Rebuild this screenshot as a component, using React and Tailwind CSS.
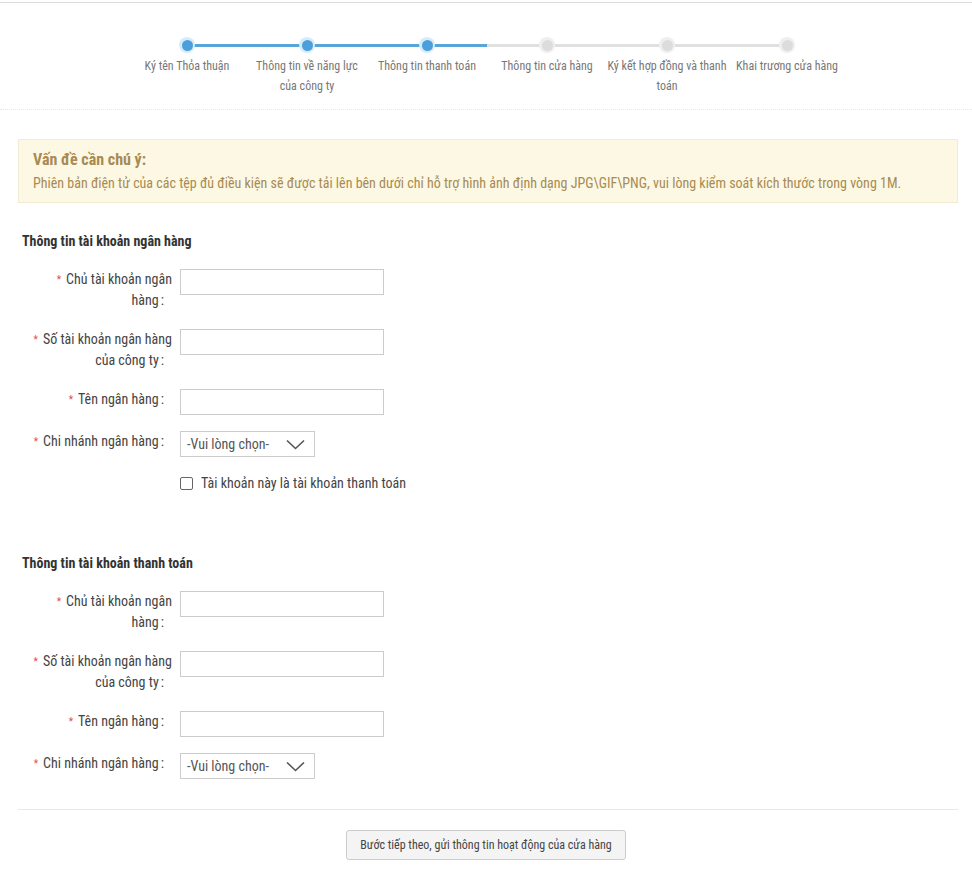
import React from 'react';

const FONT = { fontFamily: '"Roboto Condensed", "Liberation Sans Narrow", "Arial Narrow", Roboto, sans-serif' };

const steps = [
  'Ký tên Thỏa thuận',
  'Thông tin về năng lực của công ty',
  'Thông tin thanh toán',
  'Thông tin cửa hàng',
  'Ký kết hợp đồng và thanh toán',
  'Khai trương cửa hàng',
];

const Stepper = () => (
  <div className="mt-[2px] border-t border-[#dddddd]">
    <div className="flex pl-[127px] pt-[33px] h-[106px]">
      {steps.map((label, i) => {
        const done = i <= 2;
        return (
          <div key={i} className="w-[120px] flex flex-col items-center">
            <div className="relative w-full h-[18px] flex items-center justify-center">
              {i > 0 && (
                <div className={`absolute left-0 w-1/2 h-[3px] ${done ? 'bg-[#5aa5d8]' : 'bg-[#e0e0e0]'}`} />
              )}
              {i < steps.length - 1 && (
                <div className={`absolute right-0 w-1/2 h-[3px] ${done ? 'bg-[#5aa5d8]' : 'bg-[#e0e0e0]'}`} />
              )}
              <div className={`relative z-10 w-[16px] h-[16px] rounded-full flex items-center justify-center ${done ? 'bg-[#d3ecfb]' : 'bg-[#efefef]'}`}>
                <div className={`w-[11px] h-[11px] rounded-full ${done ? 'bg-[#4b9fdc]' : 'bg-[#dcdcdc]'}`} />
              </div>
            </div>
            <div className="mt-[2px] w-[120px] text-center text-[12px] leading-[20px] text-[#777]">{label}</div>
          </div>
        );
      })}
    </div>
    <div className="border-b border-dotted border-[#e6e6e6]" />
  </div>
);

const Label = ({ children }) => (
  <div className="w-[154px] shrink-0 text-right text-[14px] leading-[21px] text-[#444]">
    <span className="text-[#e4493c] text-[10px] mr-[5px] align-top">*</span>
    {children}
    <span className="ml-[2px] mr-[8px]">:</span>
  </div>
);

const TextRow = ({ label, h }) => (
  <div className={`flex ${h}`}>
    <Label>{label}</Label>
    <input type="text" className="ml-[8px] w-[204px] h-[26px] border border-[#cccccc] bg-white outline-none" />
  </div>
);

const SelectRow = () => (
  <div className="flex h-[26px]">
    <Label>Chi nhánh ngân hàng</Label>
    <div className="ml-[8px] w-[135px] h-[26px] border border-[#cccccc] bg-white flex items-center justify-between pl-[6px] pr-[9px]">
      <span className="text-[14px] text-[#555]">-Vui lòng chọn-</span>
      <svg width="19" height="11" viewBox="0 0 19 11" fill="none">
        <path d="M1 1.5 L9.5 9.5 L18 1.5" stroke="#555" strokeWidth="1.6" />
      </svg>
    </div>
  </div>
);

const Section = ({ title, withCheckbox }) => (
  <div>
    <div className="pl-[4px] text-[14px] leading-[20px] font-bold text-[#333]">{title}</div>
    <div className="mt-[18px]">
      <TextRow label="Chủ tài khoản ngân hàng" h="h-[60px]" />
      <TextRow label="Số tài khoản ngân hàng của công ty" h="h-[60px]" />
      <TextRow label="Tên ngân hàng" h="h-[42px]" />
      <SelectRow />
      {withCheckbox && (
        <label className="mt-[16px] ml-[162px] flex items-center h-[21px] text-[14px] text-[#444]">
          <span className="w-[13px] h-[13px] border border-[#666] rounded-[2px] bg-white mr-[8px]" />
          Tài khoản này là tài khoản thanh toán
        </label>
      )}
    </div>
  </div>
);

export default function App() {
  return (
    <div className="bg-white w-[972px] h-[884px] overflow-hidden" style={FONT}>
      <Stepper />
      <div className="pl-[18px] pr-[14px]">
        <div className="mt-[29px] h-[64px] bg-[#fcf8e4] border border-[#f3ecd2] pl-[14px] pt-[9px]">
          <div className="text-[16px] leading-[22px] font-bold text-[#a88a52]">Vấn đề cần chú ý:</div>
          <div className="mt-[2px] text-[14px] leading-[20px] text-[#a88a52]">
            Phiên bản điện tử của các tệp đủ điều kiện sẽ được tải lên bên dưới chỉ hỗ trợ hình ảnh định dạng JPG\GIF\PNG, vui lòng kiểm soát kích thước trong vòng 1M.
          </div>
        </div>
        <div className="mt-[28px]">
          <Section title="Thông tin tài khoản ngân hàng" withCheckbox />
        </div>
        <div className="mt-[59px]">
          <Section title="Thông tin tài khoản thanh toán" />
        </div>
        <div className="mt-[30px] border-t border-[#e8e8e8]" />
        <div className="mt-[20px] flex justify-center pr-[4px]">
          <button className="w-[280px] h-[30px] bg-[#f4f4f4] border border-[#cccccc] rounded-[3px] text-[12px] text-[#444]">
            Bước tiếp theo, gửi thông tin hoạt động của cửa hàng
          </button>
        </div>
      </div>
    </div>
  );
}
